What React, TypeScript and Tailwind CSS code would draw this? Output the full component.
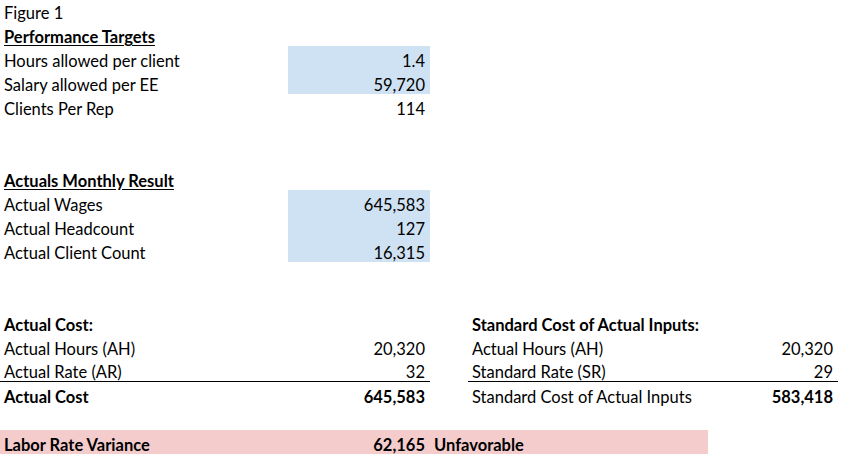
type Cell = {
  text?: string;
  bold?: boolean;
  underline?: boolean;
  right?: boolean;
  bg?: string;
  border?: boolean;
};

type RowProps = {
  a?: Cell;
  b?: Cell;
  c?: Cell;
  d?: Cell;
  e?: Cell;
  first?: boolean;
};

const cellClass = (cell: Cell | undefined) =>
  [
    "flex items-end whitespace-nowrap",
    cell?.right ? "justify-end pr-[5px]" : "pl-[4px]",
    cell?.bold ? "font-bold" : "",
    cell?.underline ? "underline underline-offset-[2px]" : "",
    cell?.bg ?? "",
    cell?.border ? "border-b border-black" : "",
  ].join(" ");

const Row = ({ a, b, c, d, e, first }: RowProps) => (
  <div
    className={`grid grid-cols-[288px_142px_38px_240px_130px] ${
      first ? "h-[22px]" : "h-6"
    }`}
  >
    <div className={cellClass(a)}>{a?.text}</div>
    <div className={cellClass(b)}>{b?.text}</div>
    <div className={cellClass(c)}>{c?.text}</div>
    <div className={cellClass(d)}>{d?.text}</div>
    <div className={cellClass(e)}>{e?.text}</div>
  </div>
);

const blue = "bg-[#cfe2f3]";
const pink = "bg-[#f4cccc]";

export default function App() {
  return (
    <div className="w-[854px] h-[467px] bg-white text-black text-[16.5px] leading-[18px] font-['Lato',sans-serif] overflow-hidden">
      <Row first a={{ text: "Figure 1" }} />
      <Row a={{ text: "Performance Targets", bold: true, underline: true }} />
      <Row
        a={{ text: "Hours allowed per client" }}
        b={{ text: "1.4", right: true, bg: blue }}
      />
      <Row
        a={{ text: "Salary allowed per EE" }}
        b={{ text: "59,720", right: true, bg: blue }}
      />
      <Row a={{ text: "Clients Per Rep" }} b={{ text: "114", right: true }} />
      <Row />
      <Row />
      <Row a={{ text: "Actuals Monthly Result", bold: true, underline: true }} />
      <Row
        a={{ text: "Actual Wages" }}
        b={{ text: "645,583", right: true, bg: blue }}
      />
      <Row
        a={{ text: "Actual Headcount" }}
        b={{ text: "127", right: true, bg: blue }}
      />
      <Row
        a={{ text: "Actual Client Count" }}
        b={{ text: "16,315", right: true, bg: blue }}
      />
      <Row />
      <Row />
      <Row
        a={{ text: "Actual Cost:", bold: true }}
        d={{ text: "Standard Cost of Actual Inputs:", bold: true }}
      />
      <Row
        a={{ text: "Actual Hours (AH)" }}
        b={{ text: "20,320", right: true }}
        d={{ text: "Actual Hours (AH)" }}
        e={{ text: "20,320", right: true }}
      />
      <Row
        a={{ text: "Actual Rate (AR)", border: true }}
        b={{ text: "32", right: true, border: true }}
        d={{ text: "Standard Rate (SR)", border: true }}
        e={{ text: "29", right: true, border: true }}
      />
      <Row
        a={{ text: "Actual Cost", bold: true }}
        b={{ text: "645,583", right: true, bold: true }}
        d={{ text: "Standard Cost of Actual Inputs" }}
        e={{ text: "583,418", right: true, bold: true }}
      />
      <Row />
      <div className="flex h-6">
        <div className={`flex w-[708px] ${pink}`}>
          <div className="w-[288px] flex items-end pl-[4px] font-bold">
            Labor Rate Variance
          </div>
          <div className="w-[142px] flex items-end justify-end pr-[5px] font-bold">
            62,165
          </div>
          <div className="flex items-end pl-[4px] font-bold">Unfavorable</div>
        </div>
      </div>
    </div>
  );
}
